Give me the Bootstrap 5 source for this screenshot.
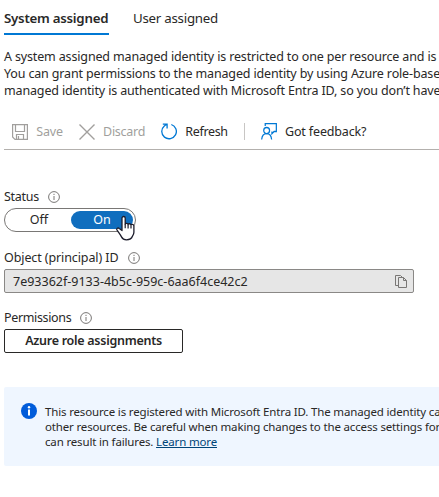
<!DOCTYPE html>
<html lang="en">
<head>
<meta charset="utf-8">
<meta name="viewport" content="width=device-width, initial-scale=1">
<title>Identity</title>
<link href="https://cdn.jsdelivr.net/npm/bootstrap@5.3.0/dist/css/bootstrap.min.css" rel="stylesheet">
<script src="https://cdn.jsdelivr.net/npm/bootstrap@5.3.0/dist/js/bootstrap.bundle.min.js" defer></script>
<style>
body{font-family:"Noto Sans","Open Sans",sans-serif;font-size:12.5px;line-height:17px;color:#292827;background:#fff;overflow:hidden;height:497px}
svg{display:block;flex:none}
.page{padding-left:4px}
.tabs{height:35px;gap:24px}
.tabs .nav-link{padding:9px 0 0;height:35px;line-height:19px;font-size:13.3px;color:#292827;white-space:nowrap}
.tabs .nav-link.active{font-weight:600;border-bottom:2px solid #0078d4}
.t-sys{width:105px;letter-spacing:-.26px}
.t-user{letter-spacing:-.25px}
.intro{margin-top:13px;height:51px;letter-spacing:-.15px}
.toolbar{margin-top:15px;height:36px;border-bottom:1px solid #b3b0ad;padding-left:8px}
.cmd{border:0;background:none;padding:0;font-size:12.5px;color:#292827;gap:8px;white-space:nowrap}
.cmd:disabled{color:#a19f9d}
.c-save{width:27px;letter-spacing:-.2px}
.c-disc{width:42px;letter-spacing:-.25px}
.c-ref{width:43px;letter-spacing:-.35px}
.c-feed{letter-spacing:-.15px}
.divider{width:1px;height:17px;background:#c8c6c4}
.field-label{height:17px;gap:9px;white-space:nowrap}
.f-status{width:35px;letter-spacing:-.3px}
.f-obj{width:115px;letter-spacing:-.1px}
.f-perm{width:67px;letter-spacing:-.35px}
.f-role{letter-spacing:-.27px}
.toggle{width:132px;height:24px;border:1px solid #797775;border-radius:12px;padding:2px;margin-top:3px}
.opt{width:64px;height:18px;line-height:18px;text-align:center}
.opt.on{width:62px;border-radius:9px;background:#106ebe;color:#fff}
.pointer{left:111px;top:6px}
.idbox{width:410px;height:24px;border:1px solid #8a8886;border-radius:2px;background:#e6e6e6;padding:0 6px 0 8px;margin-top:3px}
.role-btn{width:179px;height:24px;border:1px solid #292827;border-radius:2px;font-weight:600;font-size:12.5px;line-height:20px;padding:0;color:#292827;margin-top:3px}
.gap-status{margin-top:38px}
.gap-object{margin-top:17px}
.gap-perm{margin-top:16px}
.notice{margin-top:34px;height:79px;background:#eff6ff;padding:16px 0 0 17px;gap:8px;border-radius:2px 0 0 2px}
.notice-text{font-size:11.5px;line-height:15px;padding-top:1px;letter-spacing:-.16px}
.notice a{color:#004578}
</style>
</head>
<body>
<main class="page">
  <nav class="nav tabs flex-nowrap">
    <a class="nav-link active t-sys" href="#">System assigned</a>
    <a class="nav-link t-user" href="#">User assigned</a>
  </nav>
  <div class="intro text-nowrap">
    <div>A system assigned managed identity is restricted to one per resource and is</div>
    <div>You can grant permissions to the managed identity by using Azure role-base</div>
    <div>managed identity is authenticated with Microsoft Entra ID, so you don’t have</div>
  </div>
  <div class="toolbar d-flex align-items-center">
    <button class="cmd d-flex align-items-center" disabled>
      <svg width="16" height="16" viewBox="0 0 16 16" fill="none" stroke="#a19f9d" stroke-width="1.200"><path d="M.6.600h14.800v14.800h-12.400L.6 13zM3.500.600v6.900h9v-6.900M4.500 15.400v-4.900h7v4.900M6.500 12v3.400"/></svg>
      <span class="c-save">Save</span></button>
    <button class="cmd d-flex align-items-center ms-3" disabled>
      <svg width="16" height="16" viewBox="0 0 16 16" fill="none" stroke="#a19f9d" stroke-width="1.400"><path d="M.5.500l15 15M15.500.500l-15 15"/></svg>
      <span class="c-disc">Discard</span></button>
    <button class="cmd d-flex align-items-center ms-3">
      <svg width="16" height="17" viewBox="0 0 16 17" fill="none" stroke="#0078d4" stroke-width="1.300"><path d="M10.300 1.500A7.300 7.300 0 1 1 3.300 2.900L5.600 1.200M1.800 1.200h4.300v4.300"/></svg>
      <span class="c-ref">Refresh</span></button>
    <div class="divider ms-3 me-3"></div>
    <button class="cmd d-flex align-items-center">
      <svg width="16" height="17" viewBox="0 0 17 17" preserveAspectRatio="none" fill="none" stroke="#0078d4" stroke-width="1.300"><path d="M4.500 3V.700h11.800v7.800h-2.400l-2.300 2.200V8.400"/><circle cx="6" cy="7.600" r="3.100"/><path d="M.7 16.500c.4-3.700 2.400-5.800 5.300-5.800s4.900 2.100 5.300 5.800"/></svg>
      <span class="c-feed">Got feedback?</span></button>
  </div>

  <div class="field-label gap-status d-flex align-items-center"><span class="f-status">Status</span>
    <svg width="12" height="12" viewBox="0 0 12 12"><circle cx="6" cy="6" r="5.400" fill="none" stroke="#797775"/><path d="M6 5v4M6 2.800v1.200" stroke="#797775"/></svg></div>
  <div class="toggle d-flex position-relative">
    <div class="opt">Off</div><div class="opt on">On</div>
    <svg class="pointer position-absolute" width="19" height="26" viewBox="0 0 19 26"><path d="M6 3c0-2 3.200-2 3.200 0v6.500c0-1.700 2.900-1.500 2.900.2 0-1.500 2.900-1.200 2.900.5 0-1.400 2.900-1.100 2.900.7v6.300c0 2-.7 3-1.500 4.100-.6 2-3 3.500-6 3.500-2.300 0-3.900-1-4.900-2.900C4.200 19.300 2.400 17.300 1 15c-.8-1.500.9-2.600 2.300-1.500L6 15.500z" fill="#fff" stroke="#1c1c2b" stroke-width="1.300" stroke-linejoin="round"/><path d="M9.200 9.500v3.700M12.100 9.900v3.500M15 10.500v3" stroke="#1c1c2b" stroke-width="1.200"/></svg>
  </div>
  <div class="field-label gap-object d-flex align-items-center"><span class="f-obj">Object (principal) ID</span>
    <svg width="12" height="12" viewBox="0 0 12 12"><circle cx="6" cy="6" r="5.400" fill="none" stroke="#797775"/><path d="M6 5v4M6 2.800v1.200" stroke="#797775"/></svg></div>
  <div class="idbox d-flex align-items-center justify-content-between"><span>7e93362f-9133-4b5c-959c-6aa6f4ce42c2</span>
    <svg width="12" height="13" viewBox="0 0 12 13" fill="none" stroke="#797775"><path d="M3.500 10.500h-3V.500h5l2 2M3.500 2.500h5l3 3v7h-8zM8.500 2.500v3h3"/></svg></div>
  <div class="field-label gap-perm d-flex align-items-center"><span class="f-perm">Permissions</span>
    <svg width="12" height="12" viewBox="0 0 12 12"><circle cx="6" cy="6" r="5.400" fill="none" stroke="#797775"/><path d="M6 5v4M6 2.800v1.200" stroke="#797775"/></svg></div>
  <button class="btn role-btn d-block"><span class="f-role">Azure role assignments</span></button>

  <div class="notice d-flex">
    <svg width="16" height="16" viewBox="0 0 16 16"><circle cx="8" cy="8" r="8" fill="#015cda"/><circle cx="8" cy="4.300" r="1.200" fill="#fff"/><path d="M8 6.500v6" stroke="#fff" stroke-width="2"/></svg>
    <div class="notice-text text-nowrap">
      <div>This resource is registered with Microsoft Entra ID. The managed identity ca</div>
      <div>other resources. Be careful when making changes to the access settings for</div>
      <div>can result in failures. <a href="#">Learn more</a></div>
    </div>
  </div>
</main>
</body>
</html>
